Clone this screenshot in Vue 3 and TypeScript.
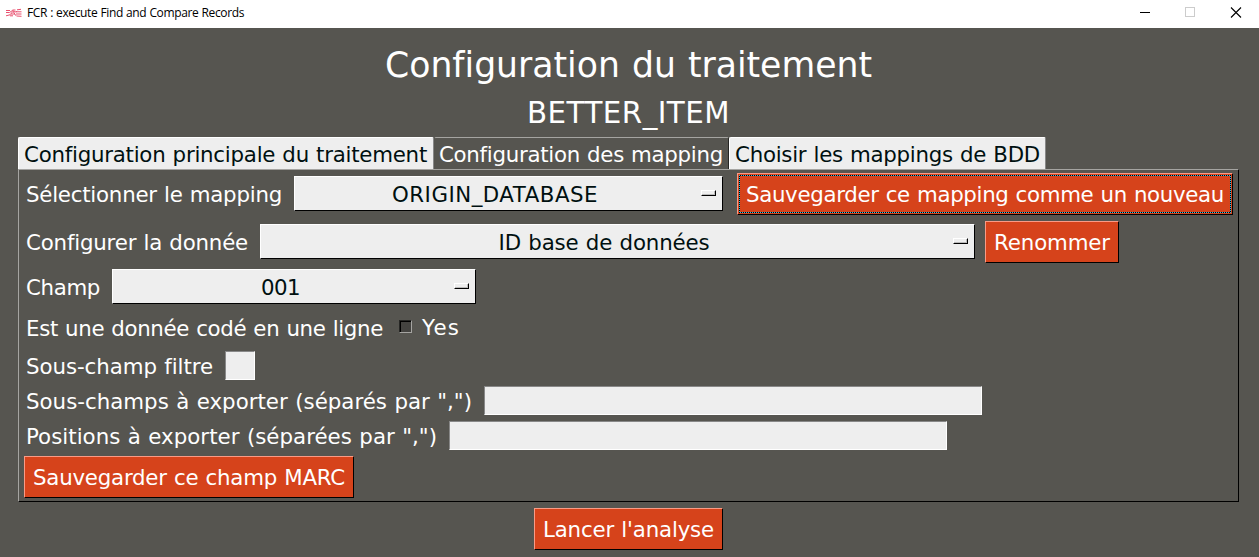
<script setup lang="ts">
import type { Directive } from 'vue'

interface Label { text: string; width: number }

const vFit: Directive<HTMLElement, number> = {
  mounted(el, binding) {
    const natural = el.getBoundingClientRect().width
    const count = (el.textContent ?? '').length
    el.style.letterSpacing = `${(binding.value - natural) / count}px`
  },
}

const tabs: (Label & { key: string; active: boolean })[] = [
  { key: 'main', text: 'Configuration principale du traitement', width: 403, active: false },
  { key: 'mapping', text: 'Configuration des mapping', width: 284, active: true },
  { key: 'bdd', text: 'Choisir les mappings de BDD', width: 305, active: false },
]
</script>

<template>
  <div class="window">
    <header class="titlebar">
      <svg class="logo" width="16" height="12" viewBox="0 0 16 12" fill="none" stroke="#e8506f">
        <path d="M0 3.500h4M6.500 3h3M11 2.800l4-.5M0 5.500h3.500l3-2 2.500 1.500 2-.5M10 4.800h5.500M0 8.800l4-1 3-3.500 3 4.500M5 7h4M10 7h5.500M4 8.800h3M10.500 9l5 .3" />
      </svg>
      <div class="caption"><span v-fit="217">FCR : execute Find and Compare Records</span></div>
      <svg class="controls" width="104" height="28" viewBox="0 0 104 28" fill="none" shape-rendering="crispEdges">
        <path d="M0 12.5h10" stroke="#000" />
        <rect x="45.5" y="7.5" width="9" height="9" stroke="#ccc" />
        <path d="M91 7.500l10 10M101 7.500l-10 10" stroke="#000" stroke-width="1.1" shape-rendering="auto" />
      </svg>
    </header>

    <main>
      <h1><span v-fit="487">Configuration du traitement</span></h1>
      <h2><span v-fit="203">BETTER_ITEM</span></h2>

      <nav class="tabs">
        <div v-for="tab in tabs" :key="tab.key" class="tab" :class="[tab.key, { active: tab.active }]">
          <span v-fit="tab.width">{{ tab.text }}</span>
        </div>
      </nav>

      <section class="panel">
        <div class="row first">
          <label><span v-fit="256">Sélectionner le mapping</span></label>
          <div class="select origin"><span v-fit="212">ORIGIN_DATABASE</span><i class="indicator"></i></div>
          <button class="focused"><span v-fit="478">Sauvegarder ce mapping comme un nouveau</span></button>
        </div>
        <div class="row second">
          <label><span v-fit="222">Configurer la donnée</span></label>
          <div class="select data"><span v-fit="217">ID base de données</span><i class="indicator"></i></div>
          <button class="rename"><span v-fit="116">Renommer</span></button>
        </div>
        <div class="row field-row">
          <label><span v-fit="74">Champ</span></label>
          <div class="select field"><span v-fit="45">001</span><i class="indicator"></i></div>
        </div>
        <div class="row check-row">
          <label><span v-fit="357">Est une donnée codé en une ligne</span></label>
          <i class="checkbox"></i>
          <div class="yes"><span v-fit="38">Yes</span></div>
        </div>
        <div class="row input-row">
          <label><span v-fit="187">Sous-champ filtre</span></label>
          <div class="input short"></div>
        </div>
        <div class="row input-row">
          <label><span v-fit="446">Sous-champs à exporter (séparés par ",")</span></label>
          <div class="input"></div>
        </div>
        <div class="row input-row">
          <label><span v-fit="411">Positions à exporter (séparées par ",")</span></label>
          <div class="input"></div>
        </div>
        <button class="save"><span v-fit="312">Sauvegarder ce champ MARC</span></button>
      </section>

      <button class="launch"><span v-fit="171">Lancer l'analyse</span></button>
    </main>
  </div>
</template>

<style>
body { margin: 0; background: #56554f; overflow: hidden; }
</style>

<style scoped>
* { box-sizing: border-box; }
.window {
  width: 1259px;
  height: 557px;
  overflow: hidden;
  background: #565550;
  color: #fff;
  font: 21.333px/28px Verdana, "DejaVu Sans", sans-serif;
  white-space: nowrap;
}
span { display: inline-block; word-spacing: 0.03em; }
.titlebar {
  display: flex;
  height: 28px;
  padding-left: 6px;
  background: #fff;
  color: #000;
}
.logo { margin-top: 7px; }
.caption {
  flex: 1;
  padding-left: 5px;
  font: 12px/26px "Open Sans", "Noto Sans", sans-serif;
}
.controls { margin-right: 15px; }
main { display: flex; flex-direction: column; padding: 0 20px 0 18px; }
h1, h2 { margin: 0; font-weight: 400; text-align: center; }
h1 { height: 60px; padding-top: 15px; font-size: 34.667px; line-height: 44px; }
h2 { height: 49px; padding-top: 6px; font-size: 29.333px; line-height: 38px; }
.tabs { display: flex; height: 32px; }
.tab {
  height: 32px;
  padding: 3px 0 0 5px;
  background: #eee;
  color: #001010;
  border-top: 1px solid #fff;
  border-left: 1px solid #fff;
  border-right: 1px solid #888;
  border-radius: 2px 2px 0 0;
}
.main { width: 416px; }
.mapping { width: 295px; }
.bdd { width: 317px; }
.tab.active {
  padding-left: 4px;
  background: #565550;
  color: #fff;
  border-top-color: #a5a4a1;
  border-left-color: #565550;
  border-right-color: #262624;
}
.panel {
  width: 1221px;
  height: 333px;
  padding: 3px 5px 0;
  border: 1px solid #000;
  border-top-color: #a5a4a1;
  border-left-color: #a5a4a1;
}
.row { display: flex; align-items: center; padding-left: 2px; }
.first { height: 42px; }
.second { height: 42px; margin-top: 6px; }
.field-row { height: 35px; margin-top: 6px; }
.check-row { height: 28px; margin-top: 10px; }
.input-row { height: 29px; margin-top: 6px; }
.check-row + .input-row { margin-top: 9px; }
label { height: 28px; margin-top: 2px; flex: none; }
.first label { width: 268px; }
.second label { width: 234px; }
.field-row label { width: 86px; }
.check-row label { width: 373px; }
.input-row label { padding-right: 12px; }
.select {
  display: flex;
  align-items: center;
  height: 35px;
  background: #eee;
  color: #001010;
  border: 1px solid #000;
  border-top-color: #fff;
  border-left-color: #fff;
  padding-right: 6px;
}
.first .select, .second .select { margin-bottom: 1px; }
.select span { margin: 0 auto; padding: 2px 6px 0 0; }
.origin { width: 429px; margin-right: 14px; }
.data { width: 715px; margin-right: 10px; }
.field { width: 364px; }
.indicator {
  width: 15px;
  height: 6px;
  margin-bottom: 1px;
  border: 1px solid #000;
  border-top-color: #fff;
  border-left-color: #fff;
  box-shadow: inset -1px -1px #bbb;
}
button {
  flex: none;
  height: 42px;
  padding: 2px 0 0 8px;
  border: 1px solid #000;
  border-top-color: #f99b86;
  border-left-color: #f99b86;
  border-radius: 0;
  background: #d6431b;
  color: #fff;
  font: inherit;
  text-align: left;
}
.focused {
  position: relative;
  width: 496px;
}
.focused::after {
  content: "";
  position: absolute;
  inset: 1px;
  background: repeating-conic-gradient(#000 0 25%, #29bce4 0 50%) 0 0 / 2px 2px;
  clip-path: polygon(evenodd, 0 0, 100% 0, 100% 100%, 0 100%, 0 0, 1px 1px, calc(100% - 1px) 1px, calc(100% - 1px) calc(100% - 1px), 1px calc(100% - 1px), 1px 1px);
}
.rename { width: 134px; }
.save { display: block; width: 330px; margin-top: 6px; }
.launch { width: 189px; margin: 6px 0 0 516px; }
.checkbox {
  width: 13px;
  height: 13px;
  margin-bottom: 3px;
  background: #444340;
  border: 1px solid #a5a4a1;
  border-top-color: #262624;
  border-left-color: #262624;
  box-shadow: inset 1px 1px #000;
}
.yes { height: 28px; margin-left: 10px; }
.input {
  width: 498px;
  height: 29px;
  background: #eee;
  border: 1px solid #fff;
  border-top-color: #888;
  border-left-color: #888;
}
.short { width: 30px; }
</style>
